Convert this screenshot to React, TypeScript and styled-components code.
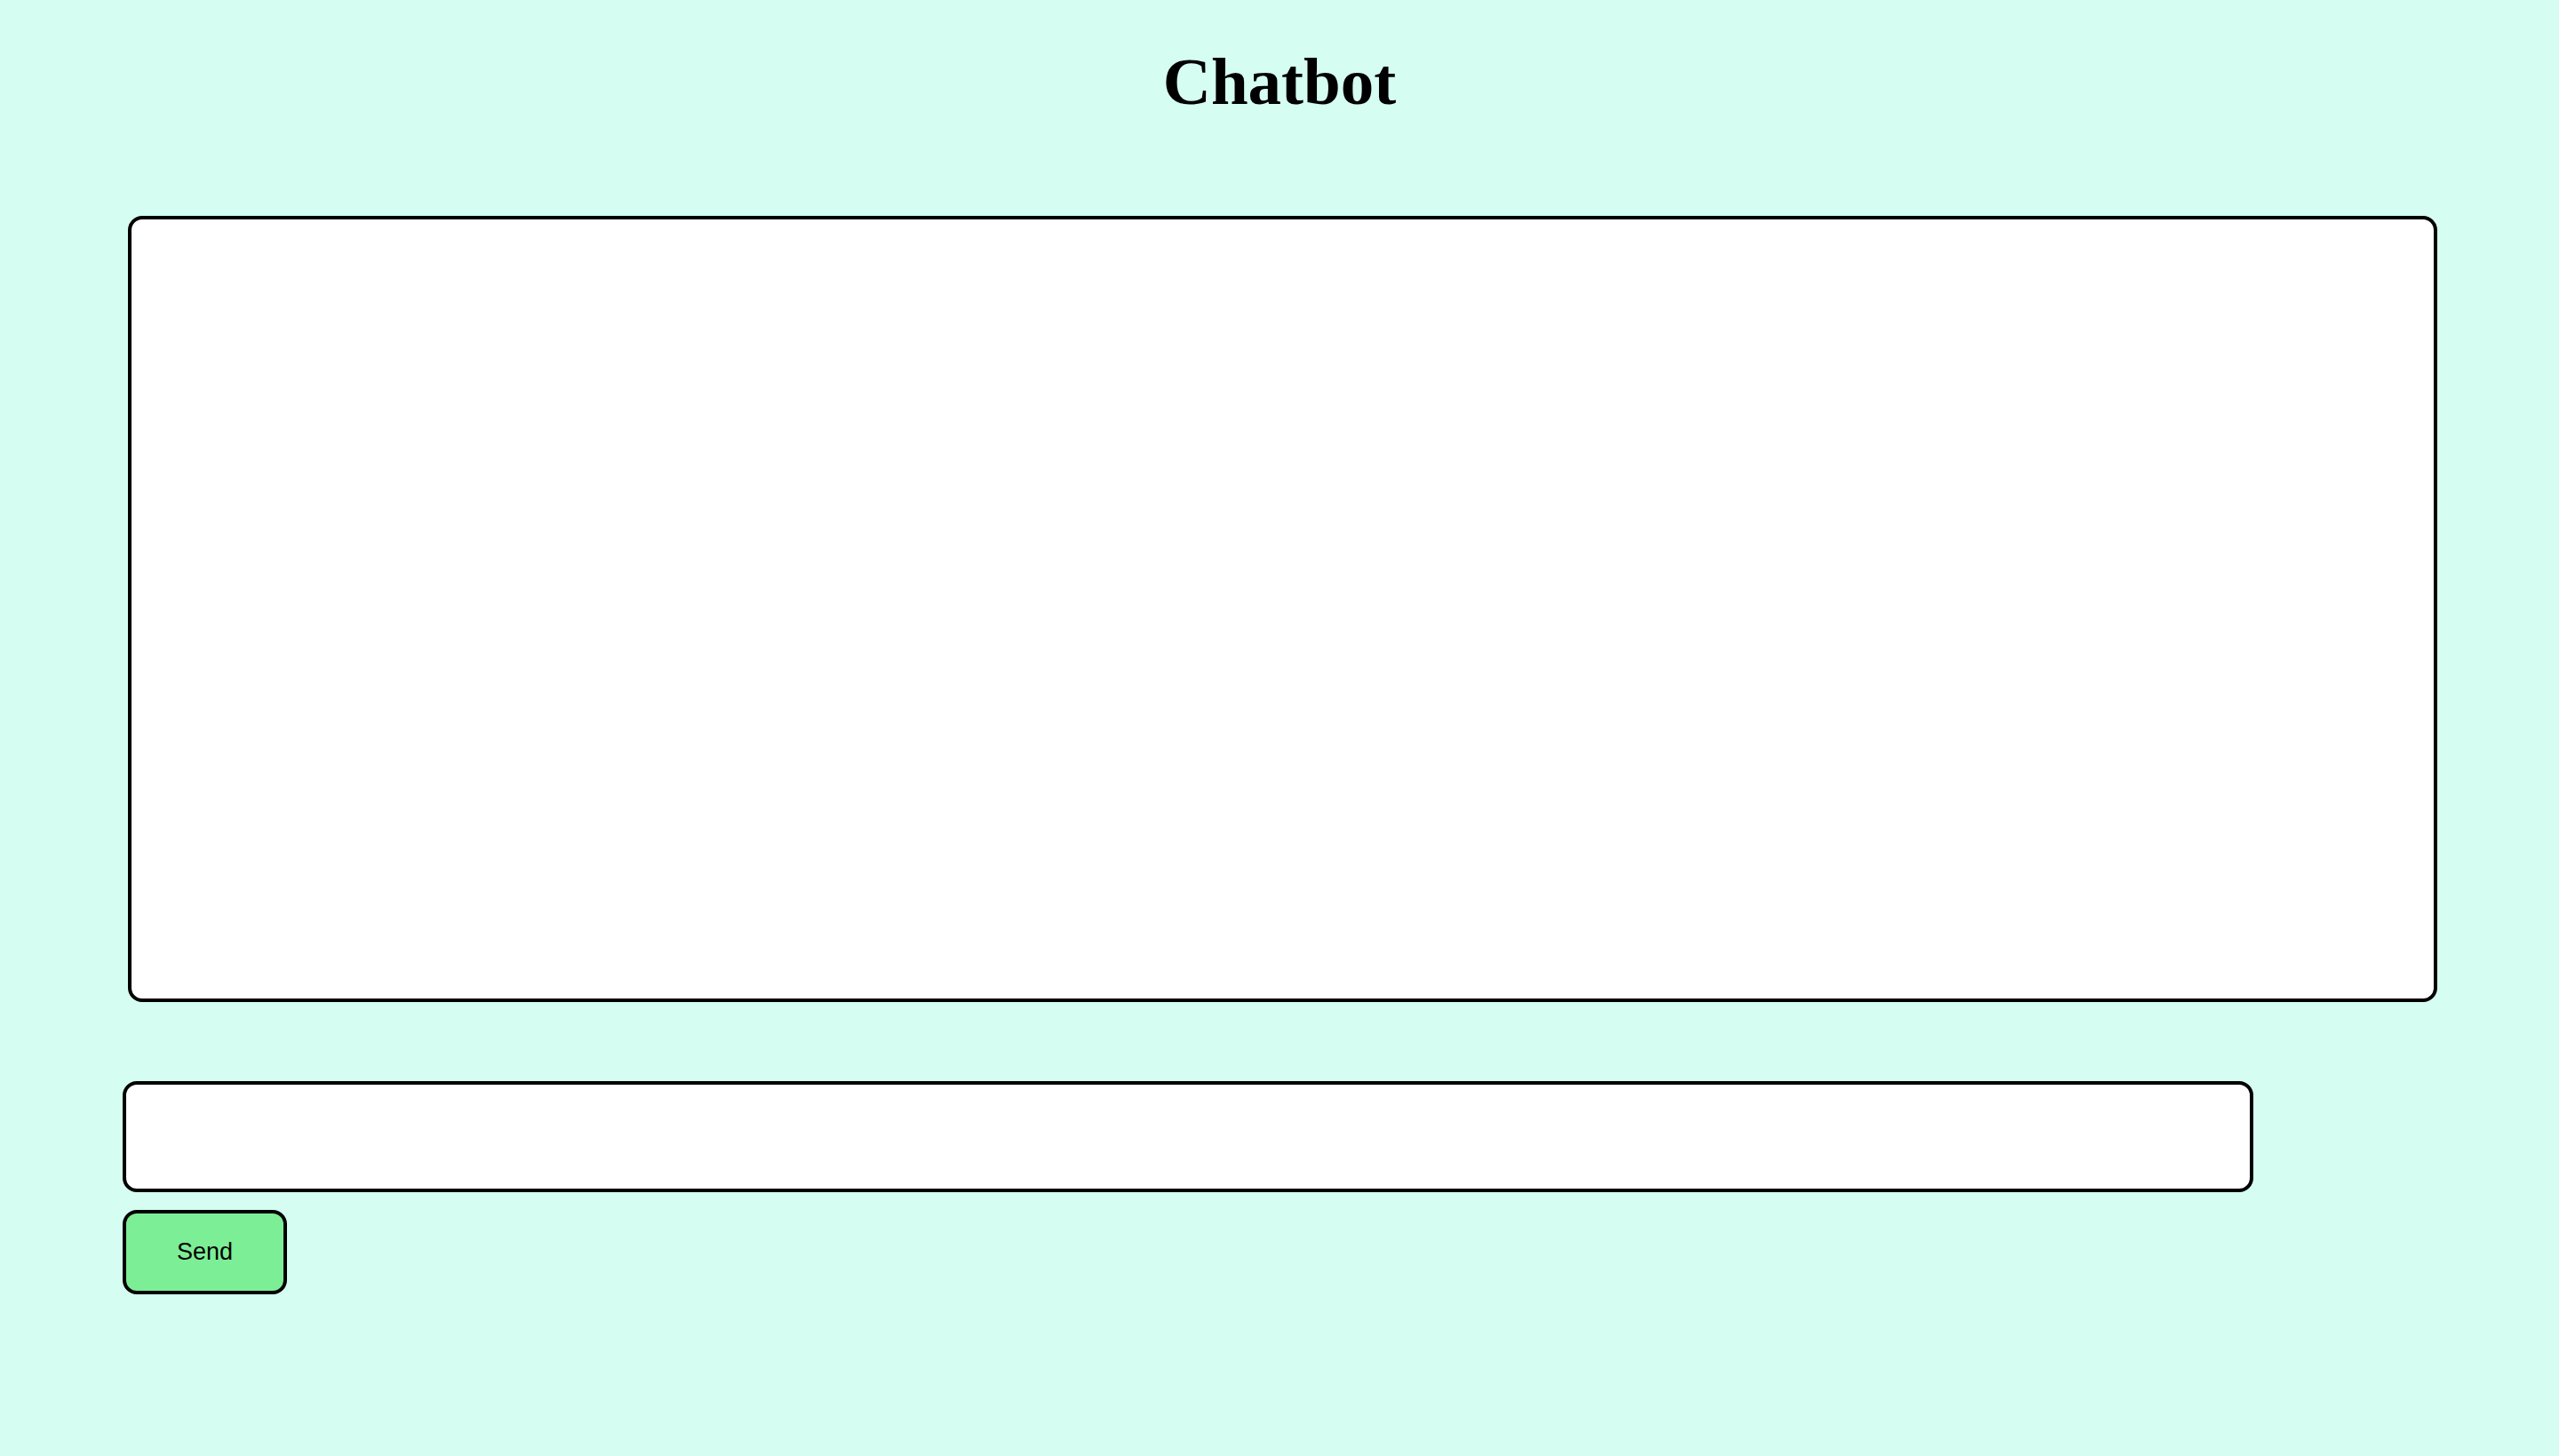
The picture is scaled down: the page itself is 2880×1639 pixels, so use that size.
import React from "react";
import styled, { createGlobalStyle } from "styled-components";

const Global = createGlobalStyle`
  html, body {
    margin: 0;
    padding: 0;
    background: #d5fdf1;
  }
  #root {
    min-height: 1639px;
  }
`;

const Page = styled.div`
  min-height: 1639px;
  background: #d5fdf1;
  padding: 0 0 0 138px;
  box-sizing: border-box;
  display: flex;
  flex-direction: column;
`;

const Title = styled.h1`
  margin: 0 0 0 -138px;
  padding-top: 49px;
  height: 243px;
  box-sizing: border-box;
  text-align: center;
  font-family: "Liberation Serif", "Times New Roman", serif;
  font-weight: bold;
  font-size: 75px;
  line-height: 86px;
  color: #000;
`;

const ChatBox = styled.div`
  margin-left: 6px;
  width: 2599px;
  height: 885px;
  box-sizing: border-box;
  background: #fff;
  border: 4px solid #000;
  border-radius: 16px;
`;

const InputRow = styled.div`
  margin-top: 89px;
  display: flex;
  flex-direction: column;
  align-items: flex-start;
  gap: 20px;
`;

const MessageInput = styled.input`
  width: 2398px;
  height: 125px;
  box-sizing: border-box;
  background: #fff;
  border: 4px solid #000;
  border-radius: 16px;
  outline: none;
  padding: 0 20px;
  font-family: "Liberation Sans", Arial, sans-serif;
  font-size: 27px;
`;

const SendButton = styled.button`
  width: 185px;
  height: 95px;
  box-sizing: border-box;
  background: #7cee96;
  border: 4px solid #000;
  border-radius: 16px;
  font-family: "Liberation Sans", Arial, sans-serif;
  font-size: 27px;
  color: #000;
  cursor: pointer;
`;

export default function App() {
  return (
    <>
      <Global />
      <Page>
        <Title>Chatbot</Title>
        <ChatBox />
        <InputRow>
          <MessageInput type="text" />
          <SendButton>Send</SendButton>
        </InputRow>
      </Page>
    </>
  );
}
